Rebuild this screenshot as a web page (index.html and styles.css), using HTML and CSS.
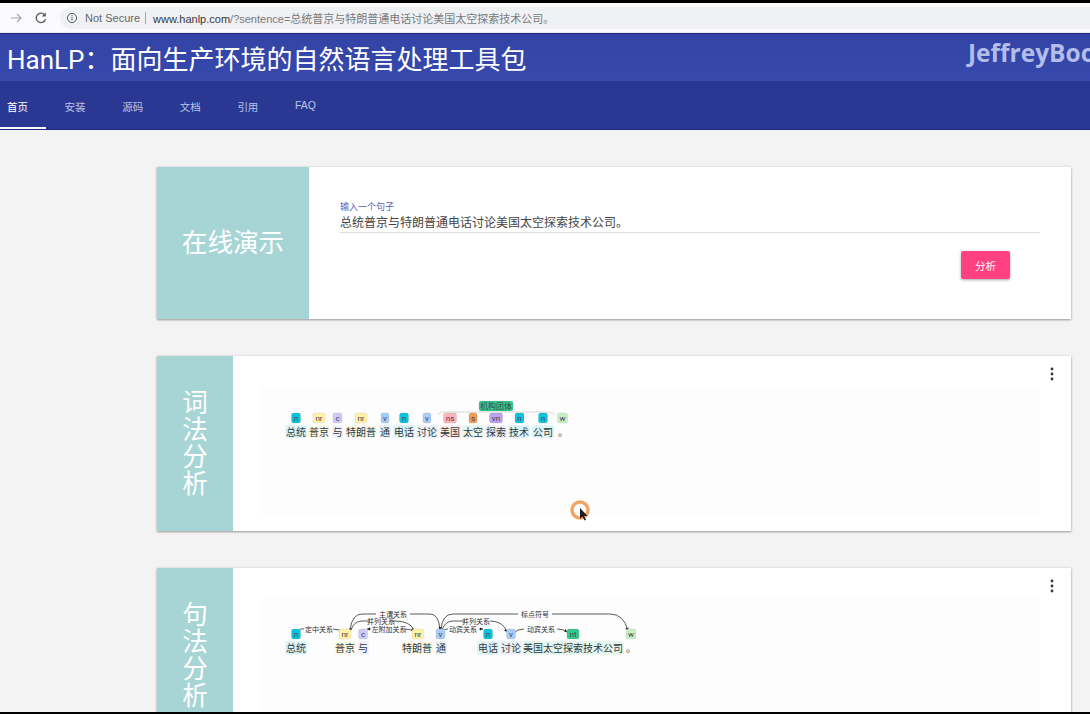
FILE: index.html
```html
<!DOCTYPE html>
<html>

<head>
    <title>HanLP</title>
    <link rel="stylesheet" href="styles.css">
</head>

<body>
    <div class="top_edge"></div>
    <div class="browser_bar">
        <svg class="nav_icon" width="14" height="14" viewBox="0 0 14 14">
            <path d="M2 7h10M8 3l4 4-4 4" fill="none" stroke="#a5a7ab" stroke-width="1.2" />
        </svg>
        <svg class="nav_icon reload" width="14" height="14" viewBox="0 0 14 14">
            <path d="M11.5 8.2A4.7 4.7 0 1 1 10.6 3.8" fill="none" stroke="#55585c" stroke-width="1.3" />
            <path d="M11.8 1.6v4h-4z" fill="#55585c" />
        </svg>
        <div class="address">
            <svg width="12" height="12" viewBox="0 0 12 12">
                <circle cx="6" cy="6" r="4.6" fill="none" stroke="#55585c" stroke-width="1" />
                <path d="M6 5.3v3.2M6 3.3v1" stroke="#55585c" stroke-width="1" />
            </svg>
            <span class="not_secure">Not Secure</span>
            <span class="url"><b>www.hanlp.com</b>/?sentence=总统普京与特朗普通电话讨论美国太空探索技术公司。</span>
        </div>
    </div>

    <header class="title_bar">
        <h1>HanLP&#xFF1A;面向生产环境的自然语言处理工具包</h1>
        <span class="watermark">JeffreyBoo</span>
    </header>

    <nav class="tabs">
        <a class="tab active">首页</a>
        <a class="tab">安装</a>
        <a class="tab">源码</a>
        <a class="tab">文档</a>
        <a class="tab">引用</a>
        <a class="tab">FAQ</a>
    </nav>

    <main class="content">
        <section class="card">
            <div class="card_side wide">在线演示</div>
            <div class="card_body form_body">
                <label class="input_label" for="sentence">输入一个句子</label>
                <input class="sentence_input" id="sentence" type="text" value="总统普京与特朗普通电话讨论美国太空探索技术公司。">
                <button class="analyze">分析</button>
            </div>
        </section>

        <section class="card">
            <div class="card_side">词法分析</div>
            <div class="card_body">
                <svg class="menu_dots" width="4" height="14" viewBox="0 0 4 14">
                    <circle cx="2" cy="2" r="1.4" /><circle cx="2" cy="7" r="1.4" /><circle cx="2" cy="12" r="1.4" />
                </svg>
                <svg class="diagram" width="778" height="130" viewBox="262 386 778 130">
                    <path class="bracket" d="M438 415q1-3 4-3h108q3 0 4 3" />
                    <rect class="tag nt" x="479" y="401" width="34" height="10" rx="2" />
                    <text class="tag_text" x="496" y="408.6">机构团体</text>

                    <rect class="word_bg b" x="285" y="425" width="22" height="13" rx="2" />
                    <rect class="word_bg y" x="308" y="425" width="22" height="13" rx="2" />
                    <rect class="word_bg p" x="332" y="425" width="11" height="13" rx="2" />
                    <rect class="word_bg y" x="345" y="425" width="32" height="13" rx="2" />
                    <rect class="word_bg v" x="379" y="425" width="12" height="13" rx="2" />
                    <rect class="word_bg b" x="393" y="425" width="22" height="13" rx="2" />
                    <rect class="word_bg v" x="416" y="425" width="22" height="13" rx="2" />
                    <rect class="word_bg r" x="439" y="425" width="22" height="13" rx="2" />
                    <rect class="word_bg g" x="462" y="425" width="22" height="13" rx="2" />
                    <rect class="word_bg p" x="485" y="425" width="22" height="13" rx="2" />
                    <rect class="word_bg b" x="508" y="425" width="22" height="13" rx="2" />
                    <rect class="word_bg b" x="532" y="425" width="22" height="13" rx="2" />

                    <rect class="tag n" x="291.500" y="413" width="9" height="10" rx="2" /><text class="tag_text" x="296" y="420.500">n</text>
                    <rect class="tag nr" x="313" y="413" width="12" height="10" rx="2" /><text class="tag_text" x="319" y="420.500">nr</text>
                    <rect class="tag c" x="333" y="413" width="9" height="10" rx="2" /><text class="tag_text" x="337.500" y="420.500">c</text>
                    <rect class="tag nr" x="355" y="413" width="12" height="10" rx="2" /><text class="tag_text" x="361" y="420.500">nr</text>
                    <rect class="tag v" x="381" y="413" width="8" height="10" rx="2" /><text class="tag_text" x="385" y="420.500">v</text>
                    <rect class="tag n" x="399.500" y="413" width="9" height="10" rx="2" /><text class="tag_text" x="404" y="420.500">n</text>
                    <rect class="tag v" x="423" y="413" width="8" height="10" rx="2" /><text class="tag_text" x="427" y="420.500">v</text>
                    <rect class="tag ns" x="443.500" y="413" width="13" height="10" rx="2" /><text class="tag_text" x="450" y="420.500">ns</text>
                    <rect class="tag s" x="469" y="413" width="8" height="10" rx="2" /><text class="tag_text" x="473" y="420.500">s</text>
                    <rect class="tag vn" x="489.500" y="413" width="13" height="10" rx="2" /><text class="tag_text" x="496" y="420.500">vn</text>
                    <rect class="tag n" x="515" y="413" width="9" height="10" rx="2" /><text class="tag_text" x="519.500" y="420.500">n</text>
                    <rect class="tag n" x="538.500" y="413" width="9" height="10" rx="2" /><text class="tag_text" x="543" y="420.500">n</text>
                    <rect class="tag w" x="557.500" y="413" width="10" height="10" rx="2" /><text class="tag_text" x="562.500" y="420.500">w</text>

                    <text class="word" x="296" y="435.500">总统</text>
                    <text class="word" x="319" y="435.500">普京</text>
                    <text class="word" x="337.500" y="435.500">与</text>
                    <text class="word" x="361" y="435.500">特朗普</text>
                    <text class="word" x="385" y="435.500">通</text>
                    <text class="word" x="404" y="435.500">电话</text>
                    <text class="word" x="427" y="435.500">讨论</text>
                    <text class="word" x="450" y="435.500">美国</text>
                    <text class="word" x="473" y="435.500">太空</text>
                    <text class="word" x="496" y="435.500">探索</text>
                    <text class="word" x="519" y="435.500">技术</text>
                    <text class="word" x="543" y="435.500">公司</text>
                    <text class="word" x="563" y="435.500">。</text>
                </svg>
            </div>
        </section>

        <section class="card">
            <div class="card_side">句法分析</div>
            <div class="card_body">
                <svg class="menu_dots" width="4" height="14" viewBox="0 0 4 14">
                    <circle cx="2" cy="2" r="1.4" /><circle cx="2" cy="7" r="1.4" /><circle cx="2" cy="12" r="1.4" />
                </svg>
                <svg class="diagram" width="778" height="130" viewBox="262 598 778 130">
                    <path class="arc" d="M300 629h4M333 629q7 0 11 4" />
                    <path class="arc" d="M350 630q2-16 12-16h14M410 614h20q9 0 10 16" />
                    <path class="arc" d="M351 630q3-9 11-9h8M392 621h3q15 0 19 9" />
                    <path class="arc" d="M367 629h4M405 629q5 0 8 2" />
                    <path class="arc" d="M441 630q1-16 12-16h65M552 614h58q14 0 18 17" />
                    <path class="arc" d="M442 630q3-9 11-9h12M490 621q13 0 17 11" />
                    <path class="arc" d="M442 631q2-2 6-2M479 629h4" />
                    <path class="arc" d="M514 633q3-4 10-4M557 629q7 0 10 3" />
                    <path class="arrow" d="M344 634l-3-.500 2-2.500zM350 631l-1-3 2.800 1zM414 631l-3-1 2-2zM367 629l3-1.500v3zM440 630l-1.500-3 3 0zM507 632l-3-1.500 2-1.500zM483 629l-3-1.500v3zM567 632l-3-.500 1.500-2.500zM628 631l-2.500-2.500 3-1z" />

                    <text class="arc_label" x="319" y="631.500">定中关系</text>
                    <text class="arc_label" x="393" y="616.500">主谓关系</text>
                    <text class="arc_label" x="381" y="623.500">并列关系</text>
                    <text class="arc_label" x="389" y="631.500">左附加关系</text>
                    <text class="arc_label" x="535" y="616.500">标点符号</text>
                    <text class="arc_label" x="476" y="623.500">并列关系</text>
                    <text class="arc_label" x="463" y="631.500">动宾关系</text>
                    <text class="arc_label" x="541" y="631.500">动宾关系</text>

                    <rect class="word_bg b" x="285" y="641" width="22" height="14" rx="2" />
                    <rect class="word_bg y" x="334" y="641" width="22" height="14" rx="2" />
                    <rect class="word_bg p" x="358" y="641" width="11" height="14" rx="2" />
                    <rect class="word_bg y" x="402" y="641" width="32" height="14" rx="2" />
                    <rect class="word_bg v" x="435" y="641" width="12" height="14" rx="2" />
                    <rect class="word_bg b" x="477" y="641" width="22" height="14" rx="2" />
                    <rect class="word_bg v" x="500" y="641" width="22" height="14" rx="2" />
                    <rect class="word_bg g" x="523" y="641" width="101" height="14" rx="2" />

                    <rect class="tag n" x="291.500" y="629" width="9" height="10" rx="2" /><text class="tag_text" x="296" y="636.500">n</text>
                    <rect class="tag nr" x="339" y="629" width="12" height="10" rx="2" /><text class="tag_text" x="345" y="636.500">nr</text>
                    <rect class="tag c" x="358.500" y="629" width="9" height="10" rx="2" /><text class="tag_text" x="363" y="636.500">c</text>
                    <rect class="tag nr" x="412" y="629" width="12" height="10" rx="2" /><text class="tag_text" x="418" y="636.500">nr</text>
                    <rect class="tag v" x="436" y="629" width="9" height="10" rx="2" /><text class="tag_text" x="440.500" y="636.500">v</text>
                    <rect class="tag n" x="483.500" y="629" width="9" height="10" rx="2" /><text class="tag_text" x="488" y="636.500">n</text>
                    <rect class="tag v" x="506.500" y="629" width="9" height="10" rx="2" /><text class="tag_text" x="511" y="636.500">v</text>
                    <rect class="tag nt" x="567" y="629" width="12" height="10" rx="2" /><text class="tag_text" x="573" y="636.500">nt</text>
                    <rect class="tag w" x="626" y="629" width="10" height="10" rx="2" /><text class="tag_text" x="631" y="636.500">w</text>

                    <text class="word" x="296" y="652">总统</text>
                    <text class="word" x="345" y="652">普京</text>
                    <text class="word" x="363" y="652">与</text>
                    <text class="word" x="417" y="652">特朗普</text>
                    <text class="word" x="441" y="652">通</text>
                    <text class="word" x="488" y="652">电话</text>
                    <text class="word" x="511" y="652">讨论</text>
                    <text class="word" x="573" y="652">美国太空探索技术公司</text>
                    <text class="word" x="631" y="652">。</text>
                </svg>
            </div>
        </section>
    </main>

    <svg class="pointer" width="24" height="26" viewBox="0 0 24 26">
        <circle cx="11" cy="11" r="8" fill="none" stroke="#f3a664" stroke-width="3.500" />
        <path d="M11 9v11l2.500-2.500 2 4 1.500-.8-2-3.800h3.500z" fill="#1c1c20" />
    </svg>
    <div class="bottom_edge"></div>
</body>

</html>
```

FILE: styles.css
```css
* {
    box-sizing: border-box;
}

html,
body {
    height: 714px;
    overflow: hidden;
}

body {
    margin: 0;
    background: #f3f3f3;
    font-family: Roboto, "Noto Sans CJK SC", sans-serif;
    position: relative;
}

.top_edge {
    height: 3px;
    background: #000;
}

.bottom_edge {
    position: absolute;
    left: 0;
    right: 0;
    bottom: 0;
    height: 2px;
    background: #000;
}

.browser_bar {
    height: 30px;
    background: #fbfbfd;
    display: flex;
    align-items: center;
    padding: 0 0 0 9px;
    border-bottom: 1px solid #e8e8f4;
}

.nav_icon {
    flex: none;
    margin-right: 11px;
}

.address {
    flex: 1;
    height: 22px;
    margin-left: 1px;
    padding-left: 6px;
    background: #f0f1f3;
    border-radius: 11px 0 0 11px;
    display: flex;
    align-items: center;
    font-family: "Liberation Sans", "Noto Sans CJK SC", sans-serif;
    font-size: 11px;
    color: #77797d;
}

.not_secure {
    margin-left: 7px;
    padding-right: 5px;
    margin-right: 7px;
    border-right: 1px solid #a8a8ac;
    color: #65686c;
    line-height: 12px;
}

.url b {
    font-weight: normal;
    color: #35373a;
}

.title_bar {
    height: 48px;
    background: linear-gradient(#3343a6, #3749ac);
    border-top: 1px solid #1e2a80;
    padding-left: 7px;
    display: flex;
    align-items: center;
    position: relative;
}

.title_bar h1 {
    margin: 0;
    font-size: 26px;
    font-weight: normal;
    color: #fff;
}

.watermark {
    position: absolute;
    left: 968px;
    top: 2px;
    font-family: "Open Sans", sans-serif;
    font-size: 24.500px;
    font-weight: 700;
    color: #b3bde9;
    white-space: nowrap;
}

.tabs {
    height: 49px;
    background: #2b3893;
    border-bottom: 1px solid #1e2a80;
    display: flex;
}

.tab {
    width: 46px;
    margin-right: 11.600px;
    padding: 18px 0 0 7px;
    font-family: "Liberation Sans", "Noto Sans CJK SC", sans-serif;
    font-size: 10.500px;
    color: #bcc4e6;
}

.tab.active {
    color: #fff;
    border-bottom: 2px solid #fff;
}

.content {
    padding: 37px 19px 0 157px;
    display: flex;
    flex-direction: column;
    gap: 37px;
}

.card {
    flex: none;
    height: 175px;
    background: #fff;
    display: flex;
    box-shadow: 0 1px 2px rgba(0, 0, 0, 0.35), 0 0 3px rgba(0, 0, 0, 0.1);
}

.card:first-child {
    height: 152px;
}

.card_side {
    flex: none;
    width: 76px;
    padding: 0 25px;
    background: #a7d5d6;
    color: #fff;
    font-size: 25.600px;
    line-height: 27px;
    display: flex;
    align-items: center;
    justify-content: center;
    text-align: center;
}

.card_side.wide {
    width: 152px;
    padding: 0;
}

.card_body {
    flex: 1;
    padding: 30px 31px 0 29px;
    position: relative;
}

.form_body {
    padding: 35px 31px 0 31px;
    display: flex;
    flex-direction: column;
}

.input_label {
    font-size: 9px;
    line-height: 11px;
    color: #5a5fb5;
}

.sentence_input {
    width: 100%;
    height: 20px;
    padding: 0 0 2px;
    border: none;
    border-bottom: 1px solid #dedede;
    outline: none;
    font-family: inherit;
    font-size: 12px;
    color: #444;
}

.analyze {
    align-self: flex-end;
    width: 49px;
    height: 28px;
    margin: 18px 30px 0 0;
    border: none;
    border-radius: 2px;
    background: #ff4081;
    color: #fff;
    font-family: inherit;
    font-size: 10.500px;
    box-shadow: 0 1px 3px rgba(0, 0, 0, 0.35);
}

.menu_dots {
    position: absolute;
    top: 11px;
    right: 17px;
    fill: #37373b;
}

.diagram {
    display: block;
    background: #fefdfe;
}

.diagram text {
    text-anchor: middle;
}

.word {
    font-size: 10px;
    fill: #2f3a3c;
}

.tag_text {
    font-size: 8px;
    fill: #3a3f55;
}

.arc_label {
    font-size: 7px;
    fill: #2e2e2e;
}

.arc,
.bracket {
    fill: none;
    stroke: #333;
    stroke-width: 0.800;
}

.bracket {
    stroke: #c9d3cc;
}

.arrow {
    fill: #222;
}

.tag {
    stroke-width: 0.500;
    stroke: rgba(0, 0, 0, 0.15);
}

.tag.n { fill: #10c3dc; }
.tag.nr { fill: #fff3a8; }
.tag.c { fill: #cfcdf8; }
.tag.v { fill: #a9cdf6; }
.tag.ns { fill: #ffb3bb; }
.tag.s { fill: #f09c55; }
.tag.vn { fill: #b9a4f0; }
.tag.w { fill: #c9f0c4; }
.tag.nt { fill: #35c98d; }

.word_bg.b { fill: #ddf5f8; }
.word_bg.y { fill: #fbf9ea; }
.word_bg.p { fill: #f1f0fc; }
.word_bg.v { fill: #eaf3fc; }
.word_bg.r { fill: #fdeef0; }
.word_bg.g { fill: #e6f6ee; }

.pointer {
    position: absolute;
    left: 569px;
    top: 499px;
}
```
